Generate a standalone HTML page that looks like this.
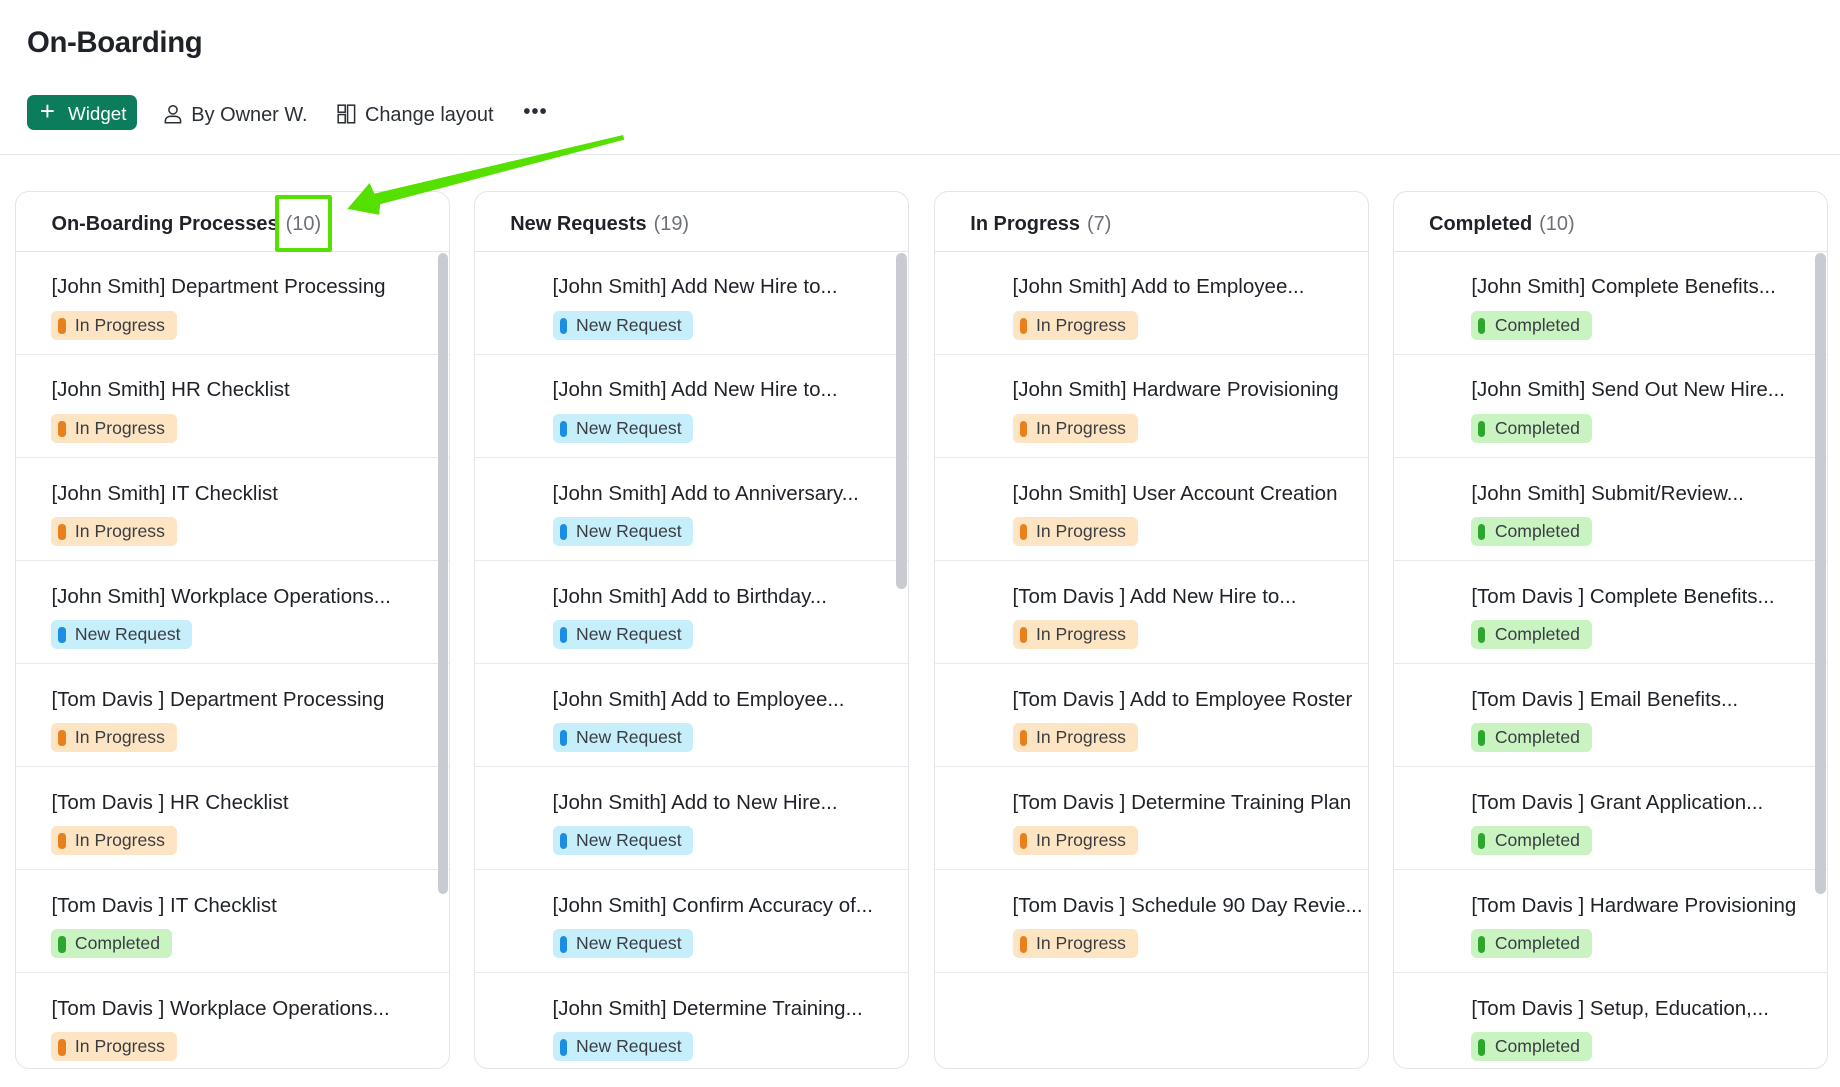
<!DOCTYPE html>
<html><head><meta charset="utf-8"><style>
html,body{margin:0;padding:0;background:#fff;width:1840px;height:1087px;overflow:hidden}
#w{zoom:1.173469;position:relative;width:1568px;height:926px;font-family:"Liberation Sans",sans-serif;color:#1f2329}
.t{position:absolute;left:23px;top:22px;font-size:25px;font-weight:bold;letter-spacing:-0.3px}
.btn{position:absolute;left:23px;top:81px;width:94px;height:30px;background:#0b7d5c;border-radius:6px;color:#fff;font-size:16px;line-height:30px}
.tb{position:absolute;top:89px;font-size:17px;color:#2b2f36}
.sep{position:absolute;left:0;right:0;top:131px;height:1px;background:#e6e8ec}
.col{position:absolute;top:163px;width:369px;height:746px;border:1px solid #e3e5ea;border-radius:12px;overflow:hidden;background:#fff}
.hd{height:50px;border-bottom:1px solid #e3e5ea;font-size:17px;font-weight:bold;line-height:55px;padding-left:30px}
.hd span{font-weight:normal;color:#6b7079;margin-left:6px}
.row{height:87px;border-bottom:1px solid #e8eaee;position:relative}
.row .n{position:absolute;top:20px;font-size:17.5px;white-space:nowrap}
.b{position:absolute;top:50px;height:25px;border-radius:5px;font-size:15px;line-height:25px;padding:0 10px 0 20px;color:#3a3d42}
.b:before{content:"";position:absolute;left:6px;top:6px;width:6px;height:14px;border-radius:3px}
.ip{background:#fde4c2}.ip:before{background:#e8801e}
.nr{background:#c6eefb}.nr:before{background:#1b8ee2}
.cp{background:#c9f4c2}.cp:before{background:#2ea62e}
.sb{position:absolute;width:9px;border-radius:5px;background:#c8cbd1;top:52px}
</style></head><body><div id="w">
<div class="t">On-Boarding</div>
<div class="btn"><span style="font-size:22px;position:absolute;left:11px;top:0px;font-weight:300">+</span><span style="position:absolute;left:35px;top:1px">Widget</span></div>
<svg style="position:absolute;left:139px;top:89px" width="17" height="17" viewBox="0 0 17 17" fill="none" stroke="#2b2f36" stroke-width="1.3"><circle cx="8.5" cy="5" r="3.5"/><path d="M2 16v-1.5C2 12 4 10.5 6.5 10.5h4C13 10.5 15 12 15 14.5V16z"/></svg>
<div class="tb" style="left:163px">By Owner W.</div>
<svg style="position:absolute;left:287px;top:89px" width="16" height="17" viewBox="0 0 16 17" fill="none" stroke="#2b2f36" stroke-width="1.3"><rect x="1" y="1" width="6" height="6"/><rect x="1" y="9" width="6" height="7"/><rect x="9" y="1" width="6" height="15"/></svg>
<div class="tb" style="left:311px">Change layout</div>
<div class="tb" style="left:446px;top:86px;font-weight:bold;letter-spacing:1px">•••</div>
<div class="sep"></div>

<div class="col" style="left:13px"><div class="hd">On-Boarding Processes<span>(10)</span></div>
<div class="row"><div class="n" style="left:30px">[John Smith] Department Processing</div><div class="b ip" style="left:30px">In Progress</div></div>
<div class="row"><div class="n" style="left:30px">[John Smith] HR Checklist</div><div class="b ip" style="left:30px">In Progress</div></div>
<div class="row"><div class="n" style="left:30px">[John Smith] IT Checklist</div><div class="b ip" style="left:30px">In Progress</div></div>
<div class="row"><div class="n" style="left:30px">[John Smith] Workplace Operations...</div><div class="b nr" style="left:30px">New Request</div></div>
<div class="row"><div class="n" style="left:30px">[Tom Davis ] Department Processing</div><div class="b ip" style="left:30px">In Progress</div></div>
<div class="row"><div class="n" style="left:30px">[Tom Davis ] HR Checklist</div><div class="b ip" style="left:30px">In Progress</div></div>
<div class="row"><div class="n" style="left:30px">[Tom Davis ] IT Checklist</div><div class="b cp" style="left:30px">Completed</div></div>
<div class="row"><div class="n" style="left:30px">[Tom Davis ] Workplace Operations...</div><div class="b ip" style="left:30px">In Progress</div></div>
<div class="sb" style="left:359px;height:546px"></div></div>

<div class="col" style="left:404px"><div class="hd">New Requests<span>(19)</span></div>
<div class="row"><div class="n" style="left:66px">[John Smith] Add New Hire to...</div><div class="b nr" style="left:66px">New Request</div></div>
<div class="row"><div class="n" style="left:66px">[John Smith] Add New Hire to...</div><div class="b nr" style="left:66px">New Request</div></div>
<div class="row"><div class="n" style="left:66px">[John Smith] Add to Anniversary...</div><div class="b nr" style="left:66px">New Request</div></div>
<div class="row"><div class="n" style="left:66px">[John Smith] Add to Birthday...</div><div class="b nr" style="left:66px">New Request</div></div>
<div class="row"><div class="n" style="left:66px">[John Smith] Add to Employee...</div><div class="b nr" style="left:66px">New Request</div></div>
<div class="row"><div class="n" style="left:66px">[John Smith] Add to New Hire...</div><div class="b nr" style="left:66px">New Request</div></div>
<div class="row"><div class="n" style="left:66px">[John Smith] Confirm Accuracy of...</div><div class="b nr" style="left:66px">New Request</div></div>
<div class="row"><div class="n" style="left:66px">[John Smith] Determine Training...</div><div class="b nr" style="left:66px">New Request</div></div>
<div class="sb" style="left:359px;height:286px"></div></div>

<div class="col" style="left:796px"><div class="hd">In Progress<span>(7)</span></div>
<div class="row"><div class="n" style="left:66px">[John Smith] Add to Employee...</div><div class="b ip" style="left:66px">In Progress</div></div>
<div class="row"><div class="n" style="left:66px">[John Smith] Hardware Provisioning</div><div class="b ip" style="left:66px">In Progress</div></div>
<div class="row"><div class="n" style="left:66px">[John Smith] User Account Creation</div><div class="b ip" style="left:66px">In Progress</div></div>
<div class="row"><div class="n" style="left:66px">[Tom Davis ] Add New Hire to...</div><div class="b ip" style="left:66px">In Progress</div></div>
<div class="row"><div class="n" style="left:66px">[Tom Davis ] Add to Employee Roster</div><div class="b ip" style="left:66px">In Progress</div></div>
<div class="row"><div class="n" style="left:66px">[Tom Davis ] Determine Training Plan</div><div class="b ip" style="left:66px">In Progress</div></div>
<div class="row"><div class="n" style="left:66px">[Tom Davis ] Schedule 90 Day Revie...</div><div class="b ip" style="left:66px">In Progress</div></div>
</div>

<div class="col" style="left:1187px"><div class="hd">Completed<span>(10)</span></div>
<div class="row"><div class="n" style="left:66px">[John Smith] Complete Benefits...</div><div class="b cp" style="left:66px">Completed</div></div>
<div class="row"><div class="n" style="left:66px">[John Smith] Send Out New Hire...</div><div class="b cp" style="left:66px">Completed</div></div>
<div class="row"><div class="n" style="left:66px">[John Smith] Submit/Review...</div><div class="b cp" style="left:66px">Completed</div></div>
<div class="row"><div class="n" style="left:66px">[Tom Davis ] Complete Benefits...</div><div class="b cp" style="left:66px">Completed</div></div>
<div class="row"><div class="n" style="left:66px">[Tom Davis ] Email Benefits...</div><div class="b cp" style="left:66px">Completed</div></div>
<div class="row"><div class="n" style="left:66px">[Tom Davis ] Grant Application...</div><div class="b cp" style="left:66px">Completed</div></div>
<div class="row"><div class="n" style="left:66px">[Tom Davis ] Hardware Provisioning</div><div class="b cp" style="left:66px">Completed</div></div>
<div class="row"><div class="n" style="left:66px">[Tom Davis ] Setup, Education,...</div><div class="b cp" style="left:66px">Completed</div></div>
<div class="sb" style="left:359px;height:546px"></div></div>

<div style="position:absolute;left:234px;top:166px;width:42px;height:42px;border:4px solid #55e000;border-radius:2px"></div>
<svg style="position:absolute;left:0;top:0" width="1568" height="926"><polygon points="296,178 315,156 319,165 531,115 532,119 324,174 323,183" fill="#55e000"/></svg>
</div></body></html>
